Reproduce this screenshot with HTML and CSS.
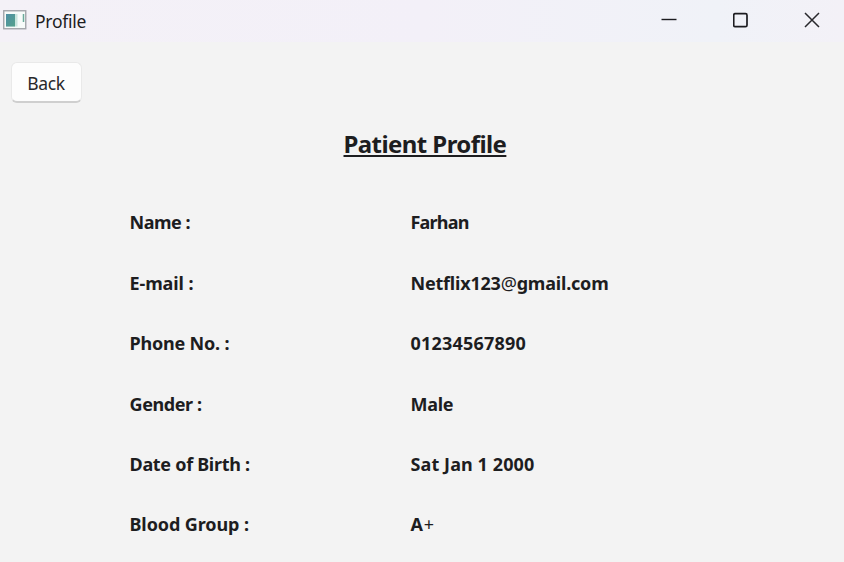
FILE: index.html
```html
<!DOCTYPE html>
<html lang="en">
<head>
<meta charset="utf-8">
<title>Profile</title>
<link rel="stylesheet" href="styles.css">
</head>
<body>
<header class="titlebar">
  <svg class="app-icon" width="24" height="20" viewBox="0 0 24 20">
    <defs><linearGradient id="pane" x1="0" y1="0" x2="1" y2="1"><stop offset="0" stop-color="#4e8fa5"/><stop offset="1" stop-color="#55a18c"/></linearGradient></defs>
    <rect x=".75" y=".75" width="22" height="18" fill="#f7fbfa" stroke="#a3a5ab" stroke-width="1.400"/>
    <rect x="3" y="4" width="11.500" height="12.500" fill="#c8e4dd"/>
    <rect x="3" y="4" width="9" height="12.500" fill="url(#pane)"/>
    <path d="M20.500 4v8" stroke="#6aaa9b" stroke-width="1.500"/>
  </svg>
  <span class="window-title">Profile</span>
  <div class="controls">
    <svg width="16" height="16" viewBox="0 0 16 16"><path d="M.5 7.500h15" stroke="#1c1c20" stroke-width="1.400"/></svg>
    <svg width="16" height="16" viewBox="0 0 16 16"><rect x=".700" y="1.700" width="13.300" height="13" rx="1.500" fill="none" stroke="#1c1c20" stroke-width="1.700"/></svg>
    <svg width="16" height="16" viewBox="0 0 16 16"><path d="M1 1l14 14M15 1L1 15" stroke="#28282c" stroke-width="1.500"/></svg>
  </div>
</header>
<main class="content">
  <button class="back" type="button">Back</button>
  <h1 class="heading">Patient Profile</h1>
  <dl class="details">
    <dt class="name">Name :</dt><dd class="name-value">Farhan</dd>
    <dt class="email">E-mail :</dt><dd class="email-value">Netflix123<span class="light">@</span>gmail.com</dd>
    <dt class="phone">Phone No. :</dt><dd class="phone-value">01234567890</dd>
    <dt class="gender">Gender :</dt><dd>Male</dd>
    <dt>Date of Birth :</dt><dd class="birth-value">Sat Jan 1 2000</dd>
    <dt class="blood">Blood Group :</dt><dd class="blood-value">A<span class="light">+</span></dd>
  </dl>
</main>
</body>
</html>
```
FILE: styles.css
```css
* { box-sizing: border-box; }
body {
  margin: 0;
  height: 562px;
  overflow: hidden;
  background: #f3f3f3;
  color: #1d1d1f;
  font-family: "Noto Sans", "Open Sans", sans-serif;
}
.titlebar {
  display: flex;
  align-items: center;
  height: 42px;
  padding: 0 24px 2px 3px;
  background: linear-gradient(90deg, #f4f1f7, #f3f0f8 50%, #f0f2f8 85%, #f3f1f7);
}
.app-icon { flex: none; }
.window-title {
  margin-left: 8px;
  font-size: 17.5px;
  line-height: 24px;
  letter-spacing: -.25px;
  padding-top: 1px;
}
.controls {
  display: flex;
  gap: 55.5px;
  margin-left: auto;
}
.controls svg { display: block; }
.content { padding: 20px 11px 0; }
.back {
  display: block;
  width: 71px;
  height: 41px;
  padding: 1px 1px 0 0;
  border: 1px solid #e9e9e9;
  border-bottom: 2px solid #cfcfcf;
  border-radius: 6px;
  background: #fdfdfd;
  color: #28282a;
  font: 17.5px/24px "Noto Sans", sans-serif;
  letter-spacing: -.4px;
}
.heading {
  margin: 25px 0 0 332.5px;
  width: max-content;
  font-size: 24px;
  line-height: 32px;
  font-weight: 700;
  letter-spacing: -.58px;
  text-decoration: underline;
  text-decoration-thickness: 2px;
  text-underline-offset: 2px;
  text-decoration-skip-ink: none;
}
.details {
  display: grid;
  grid-template-columns: 281px 1fr;
  grid-auto-rows: 60.4px;
  align-items: center;
  margin: 32.3px 0 0 118.5px;
  font-size: 18px;
  line-height: 26px;
  font-weight: 700;
  letter-spacing: -.3px;
  white-space: nowrap;
}
.details dd { margin: 0; }
.name { letter-spacing: -.5px; }
.email { letter-spacing: -.1px; }
.phone { letter-spacing: -.2px; }
.gender { letter-spacing: -.4px; }
.blood { letter-spacing: -.1px; }
.name-value { letter-spacing: -.8px; }
.email-value { letter-spacing: -.2px; }
.phone-value { letter-spacing: .2px; }
.birth-value { letter-spacing: .1px; }
.blood-value { letter-spacing: .7px; }
.light { font-weight: 400; }
```
